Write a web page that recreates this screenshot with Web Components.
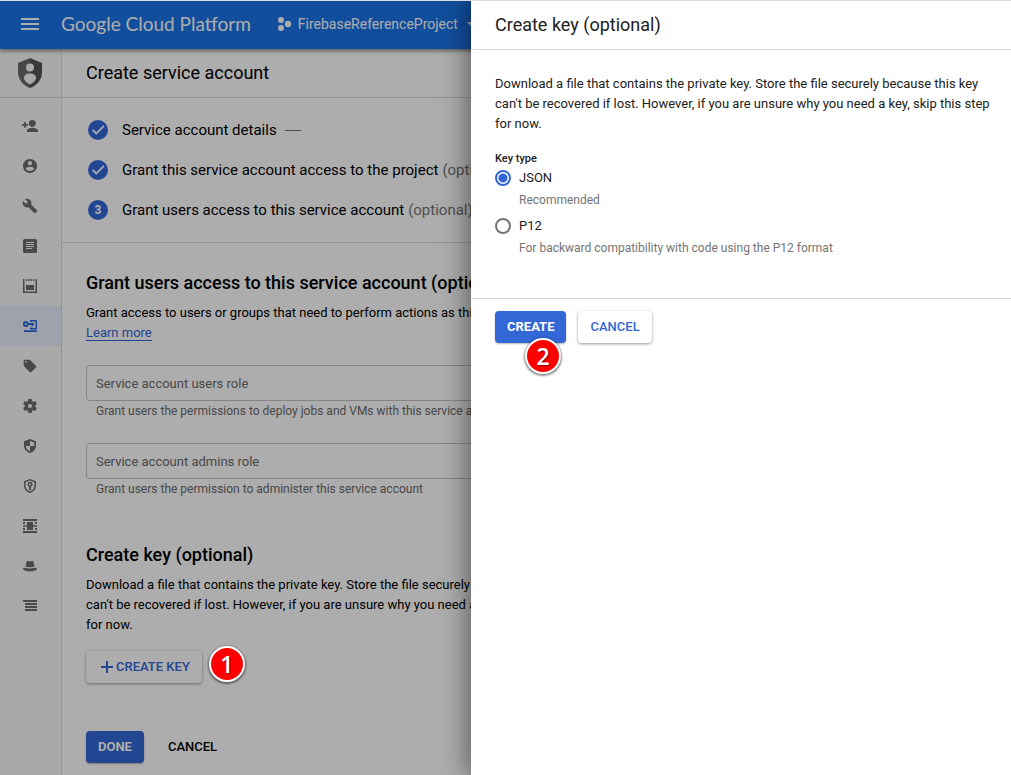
<!DOCTYPE html>
<html lang="en">
<head>
<meta charset="utf-8">
<title>Create service account</title>
<style>
  html, body { margin: 0; min-height: 100vh; }
  body { font: 13px/20px Roboto, sans-serif; color: #000; background: #fff; }
</style>
</head>
<body>
<gcp-app></gcp-app>

<script>
const define = (name, html, setup) => {
  const template = document.createElement('template');
  template.innerHTML = html;
  customElements.define(name, class extends HTMLElement {
    connectedCallback() {
      if (this.shadowRoot) return;
      this.attachShadow({ mode: 'open' }).append(template.content.cloneNode(true));
      if (setup) setup(this, this.shadowRoot);
    }
  });
};

/* Icons share an 18 unit grid. */
const ICONS = {
  'person-add': '<circle cx="11.3" cy="6.3" r="3.400"/><path d="M6 15v-1.200c0-1.900 3-3 5.400-3s5.600 1.100 5.600 3V15zM3.200 5h1.700v2H7v1.700H4.900v2H3.200v-2H1V7h2.200z"/>',
  'account': '<path transform="translate(.6 .6) scale(.7)" d="M12 2C6.480 2 2 6.480 2 12s4.480 10 10 10 10-4.480 10-10S17.520 2 12 2zm0 3c1.660 0 3 1.340 3 3s-1.340 3-3 3-3-1.340-3-3 1.340-3 3-3zm0 14.200c-2.500 0-4.710-1.280-6-3.220.030-1.990 4-3.080 6-3.080 1.990 0 5.970 1.090 6 3.080-1.290 1.940-3.500 3.220-6 3.220z"/>',
  'wrench': '<path transform="translate(1.200 1.200) scale(.65)" stroke="currentColor" stroke-width=".6" d="M22.7 19l-9.1-9.1c.9-2.3.4-5-1.5-6.900-2-2-5-2.400-7.400-1.300L9 6 6 9 1.600 4.700C.4 7.100.9 10.100 2.900 12.100c1.900 1.900 4.600 2.400 6.900 1.500l9.100 9.100c.4.4 1 .4 1.400 0l2.300-2.300c.5-.4.5-1.100.1-1.400z"/>',
  'article': '<path fill-rule="evenodd" d="M3.500 2h11A1.500 1.500 0 0 1 16 3.500v11a1.500 1.500 0 0 1-1.500 1.500h-11A1.500 1.500 0 0 1 2 14.500v-11A1.500 1.500 0 0 1 3.500 2zM5 5v1h8V5zm0 2v1h8V7zm0 2v1h8V9zm0 2v1h6v-1z"/>',
  'notepad': '<path d="M2 2h1.500v12.500h11V2H16v14H2zM5 8h8v5H5zM5 2h1.300v2H5zm2.300 0h1.300v2H7.300zm2.300 0h1.300v2H9.600zm2.300 0h1.300v2h-1.300z"/>',
  'key-account': '<path fill-rule="evenodd" d="M5 4a3 3 0 0 1 2.800 2H13v2h-1v1.500h-1.500V8H7.800A3 3 0 1 1 5 4zm0 2a1 1 0 1 0 0 2 1 1 0 0 0 0-2z"/><path d="M9 3h7v9.500H9v-2h1.500v.5h4V4.500h-4V5H9zM3 13.200h13V15H3z"/>',
  'tag': '<path transform="translate(1.400 1.400) scale(.63)" d="M21.410 11.580l-9-9C12.050 2.220 11.550 2 11 2H4c-1.100 0-2 .9-2 2v7c0 .55.22 1.050.59 1.420l9 9c.36.36.86.58 1.410.58.55 0 1.050-.22 1.410-.59l7-7c.37-.36.59-.86.59-1.410 0-.55-.23-1.060-.59-1.420zM5.500 7C4.670 7 4 6.330 4 5.500S4.670 4 5.500 4 7 4.670 7 5.500 6.330 7 5.500 7z"/>',
  'gear': '<path transform="translate(.6 .6) scale(.7)" d="M19.430 12.980c.04-.32.07-.64.07-.98s-.03-.66-.07-.98l2.110-1.650c.19-.15.24-.42.12-.64l-2-3.460c-.12-.22-.39-.3-.61-.22l-2.490 1c-.52-.4-1.080-.73-1.690-.98l-.38-2.650C14.460 2.180 14.250 2 14 2h-4c-.25 0-.46.18-.49.42l-.38 2.650c-.61.25-1.170.59-1.690.98l-2.490-1c-.23-.09-.49 0-.61.22l-2 3.460c-.13.22-.07.49.12.64l2.110 1.650c-.04.32-.07.65-.07.98s.03.66.07.98l-2.110 1.650c-.19.15-.24.42-.12.64l2 3.460c.12.22.39.3.61.22l2.490-1c.52.4 1.080.73 1.690.98l.38 2.650c.03.24.24.42.49.42h4c.25 0 .46-.18.49-.42l.38-2.650c.61-.25 1.170-.59 1.690-.98l2.490 1c.23.09.49 0 .61-.22l2-3.460c.12-.22.07-.49-.12-.64zM12 15a3 3 0 1 1 0-6 3 3 0 0 1 0 6z"/>',
  'shield': '<path fill-rule="evenodd" d="M9 2l6 2.300v4.200c0 3.500-2.500 6.500-6 7.500-3.500-1-6-4-6-7.500V4.300zM9 4v5H4.800c.3 2.500 1.900 4.400 4.200 5.200V9h4.200V5.500z"/>',
  'shield-key': '<path fill-rule="evenodd" d="M9 2l6 2.300v4.200c0 3.500-2.500 6.500-6 7.500-3.500-1-6-4-6-7.500V4.300zM9 3.600L4.500 5.300v3.200c0 2.700 1.800 5.100 4.500 5.900 2.700-.8 4.500-3.200 4.500-5.900V5.300z"/><path fill-rule="evenodd" d="M9 4.800a2.600 2.600 0 0 1 1 5v3.400H8.100V9.800a2.600 2.600 0 0 1 .9-5zm0 1.600a1 1 0 1 0 0 2 1 1 0 0 0 0-2z"/>',
  'queue': '<path d="M2 2h14v2H2zm0 12h14v2H2zM6 5h6v8H6zM2 5h2v2H2zm12 0h2v2h-2zM2 8.300h14v1.500H2zM2 11h2v2H2zm12 0h2v2h-2z"/>',
  'hat': '<path d="M4.500 9.500l.8-4C5.600 4 6.700 3.700 7.700 4.200c.9.4 1.700.4 2.600 0 1-.5 2.100-.2 2.400 1.300l.8 4c-2.500 1-6.500 1-9 0zM2 11.500c0-.7.7-1 1.700-.8 3.500.9 7.100.9 10.600 0 1-.2 1.700.1 1.700.8 0 1.700-3.400 2.900-7 2.900s-7-1.200-7-2.900z"/>',
  'lines': '<path d="M2 3h14v2H2zm2 3h12v2H4zm0 3h12v2H4zm0 3h12v2H4z"/>',
  'menu': '<path d="M0 3h18v2H0zm0 5h18v2H0zm0 5h18v2H0z"/>',
  'project': '<circle cx="5" cy="5" r="3"/><circle cx="5" cy="13" r="3"/><circle cx="12" cy="9" r="3.200"/>',
  'arrow': '<path d="M4 7h10l-5 5z"/>',
  'plus': '<path d="M8 3h2v5h5v2h-5v5H8v-5H3V8h5z"/>',
  'check': '<path d="M3 9.400l1.200-1.200 3.100 3.100 7-7 1.200 1.200-8.200 8.200z"/>'
};

define('gcp-icon', `
  <style>
    :host { display: block; width: 18px; height: 18px; flex: none; }
    svg { display: block; width: 100%; height: 100%; fill: currentColor; }
  </style>
  <svg viewBox="0 0 18 18" aria-hidden="true"></svg>`,
  (el, root) => { root.querySelector('svg').innerHTML = ICONS[el.getAttribute('name')] || ''; });

define('gcp-topbar', `
  <style>
    :host { display: block; position: relative; }
    header { display: flex; align-items: center; box-sizing: border-box; height: 48px; padding: 0 0 2px 21px; background: #1a73e8; color: #fff; box-shadow: 0 2px 4px rgba(0,0,0,.45); }
    button { display: flex; align-items: center; border: 0; padding: 0; background: none; color: inherit; font: inherit; }
    .logo { margin: 0 25px 0 22px; color: inherit; text-decoration: none; font: 19px/28px Lato, sans-serif; white-space: nowrap; }
    .project { gap: 4px; font-size: 14px; line-height: 20px; }
    .project gcp-icon:last-child { margin-left: 1px; }
  </style>
  <header>
    <button aria-label="Main menu"><gcp-icon name="menu"></gcp-icon></button>
    <a class="logo" href="#">Google Cloud Platform</a>
    <button class="project"><gcp-icon name="project"></gcp-icon>FirebaseReferenceProject<gcp-icon name="arrow"></gcp-icon></button>
  </header>`);

define('gcp-rail', `
  <style>
    :host { display: block; width: 61px; flex: none; background: #fafafa; border-right: 1px solid #dadada; color: #6c6c6c; }
    .product { display: flex; align-items: center; justify-content: center; height: 48px; border-bottom: 1px solid #dadada; margin-right: -1px; padding-right: 2px; }
    .product svg { width: 24px; height: 30px; }
    ul { list-style: none; margin: 0; padding: 8px 0; }
    a { display: flex; align-items: center; justify-content: center; height: 40px; padding-right: 1px; color: inherit; }
    a[aria-current] { background: #e8effc; color: #2f66dc; }
  </style>
  <div class="product">
    <svg viewBox="0 0 24 30" aria-hidden="true">
      <path fill="#6b6b6b" d="M12 0L0 5v9.500C0 21.500 5 27.500 12 30z"/>
      <path fill="#555" d="M12 0l12 5v9.500C24 21.500 19 27.500 12 30z"/>
      <circle cx="12" cy="9.500" r="4" fill="#fafafa"/>
      <path fill="#fafafa" d="M12 15.500c3.600 0 6 1.700 6 4.300 0 2.800-3.200 5.800-6 6.500-2.800-.7-6-3.700-6-6.500 0-2.600 2.400-4.300 6-4.300z"/>
    </svg>
  </div>
  <nav aria-label="IAM and admin"><ul></ul></nav>`,
  (el, root) => {
    const items = [['person-add', 'IAM'], ['account', 'Identity'], ['wrench', 'Troubleshooter'], ['article', 'Policies'],
      ['notepad', 'Quotas'], ['key-account', 'Service accounts'], ['tag', 'Labels'], ['gear', 'Settings'], ['shield', 'Privacy'],
      ['shield-key', 'Keys'], ['queue', 'Proxy'], ['hat', 'Roles'], ['lines', 'Audit logs']];
    root.querySelector('ul').innerHTML = items.map(([icon, label]) =>
      `<li><a href="#" aria-label="${label}"${icon === 'key-account' ? ' aria-current="page"' : ''}><gcp-icon name="${icon}"></gcp-icon></a></li>`).join('');
  });

define('gcp-step', `
  <style>
    :host { display: flex; align-items: center; height: 40px; padding-left: 2px; font-size: 15px; white-space: nowrap; }
    .mark { display: flex; align-items: center; justify-content: center; width: 20px; height: 20px; margin-right: 14px; border-radius: 50%; background: #3367d6; color: #fff; font-size: 12px; font-weight: 700; }
    .optional { color: #757575; margin-left: 4px; }
    .dash { width: 16px; height: 1px; margin-left: 8px; background: #757575; }
  </style>
  <span class="mark"></span><span><slot></slot></span>`,
  (el, root) => {
    const number = el.getAttribute('number');
    root.querySelector('.mark').innerHTML = number || '<gcp-icon name="check"></gcp-icon>';
    if (el.hasAttribute('optional')) root.append(Object.assign(document.createElement('span'), { className: 'optional', textContent: '(optional)' }));
    if (el.hasAttribute('dash')) root.append(Object.assign(document.createElement('span'), { className: 'dash' }));
  });

define('gcp-section', `
  <style>
    :host { display: block; }
    h2 { margin: 0 0 8px; font-size: 18px; font-weight: 500; line-height: 24px; white-space: nowrap; }
    p { display: flow-root; margin: 0; max-width: 508px; }
    ::slotted(a) { display: table; line-height: 14px; margin: 3px 0 2px; color: #3367d6; text-decoration: none; border-bottom: 1px solid #3367d6; }
  </style>
  <h2><slot name="title"></slot></h2>
  <p><slot></slot></p>
  <slot name="body"></slot>`);

define('gcp-field', `
  <style>
    :host { display: block; margin-top: 22px; max-width: 508px; }
    input { display: block; box-sizing: border-box; width: 100%; height: 36px; padding: 0 9px; border: 1px solid #c4c4c4; border-radius: 4px; background: none; font: inherit; }
    input::placeholder { color: #6b6b6b; opacity: 1; }
    .hint { padding-left: 10px; font-size: 12px; color: #6b6b6b; white-space: nowrap; }
  </style>
  <input id="field" aria-describedby="hint">
  <div class="hint" id="hint"><slot></slot></div>`,
  (el, root) => {
    const input = root.querySelector('input');
    input.placeholder = el.getAttribute('label');
    input.setAttribute('aria-label', el.getAttribute('label'));
  });

define('gcp-button', `
  <style>
    :host { display: block; }
    button { display: flex; align-items: center; height: 32px; padding: 0 12px; border: 0; border-radius: 4px; background: none; color: #000; font: 500 13px/20px Roboto, sans-serif; white-space: nowrap; }
    :host([kind]) button { color: #3367d6; box-shadow: 0 1px 3px rgba(0,0,0,.4); }
    :host([kind="filled"]) button { background: #3367d6; color: #fff; font-weight: 700; box-shadow: 0 1px 2px rgba(0,0,0,.3); }
  </style>
  <button><slot></slot></button>`,
  (el, root) => {
    if (!el.hasAttribute('icon')) return;
    const icon = document.createElement('gcp-icon');
    icon.setAttribute('name', el.getAttribute('icon'));
    root.querySelector('button').prepend(icon);
  });

define('gcp-badge', `
  <style>
    :host { display: flex; align-items: center; justify-content: center; box-sizing: border-box; width: 36px; height: 36px; border: 2px solid #fff; border-radius: 50%; background: #f00; color: #fff; font: 600 23px/32px "Open Sans", sans-serif; box-shadow: 0 1px 2px 1px rgba(0,0,0,.45); text-shadow: 1px 1px 1px rgba(0,0,0,.5); }
  </style>
  <slot></slot>`);

define('gcp-account-page', `
  <style>
    :host { display: block; flex: 1; min-width: 0; }
    h1 { display: flex; align-items: center; height: 48px; margin: 0; padding-left: 24px; border-bottom: 1px solid #dadada; font-size: 18px; font-weight: 400; }
    .steps { padding: 12px 24px; border-bottom: 1px solid #dadada; }
    .content { padding: 28px 24px 12px; }
    .key { margin-top: 44px; }
    .create { position: relative; width: max-content; margin-top: 16px; }
    .create gcp-badge { position: absolute; left: 100%; top: -5px; margin-left: 7px; z-index: 3; }
    .actions { display: flex; gap: 12px; margin-top: 48px; }
  </style>
  <h1>Create service account</h1>
  <div class="steps">
    <gcp-step dash>Service account details</gcp-step>
    <gcp-step optional>Grant this service account access to the project</gcp-step>
    <gcp-step number="3" optional>Grant users access to this service account</gcp-step>
  </div>
  <div class="content">
    <gcp-section>
      <span slot="title">Grant users access to this service account (optional)</span>
      Grant access to users or groups that need to perform actions as this service account.
      <a href="#">Learn more</a>
    </gcp-section>
    <gcp-field label="Service account users role">Grant users the permissions to deploy jobs and VMs with this service account</gcp-field>
    <gcp-field label="Service account admins role">Grant users the permission to administer this service account</gcp-field>
    <gcp-section class="key">
      <span slot="title">Create key (optional)</span>
      Download a file that contains the private key. Store the file securely because this key can't be recovered if lost. However, if you are unsure why you need a key, skip this step for now.
      <div class="create" slot="body">
        <gcp-button kind="raised" icon="plus">CREATE KEY</gcp-button>
        <gcp-badge>1</gcp-badge>
      </div>
    </gcp-section>
    <div class="actions">
      <gcp-button kind="filled">DONE</gcp-button>
      <gcp-button>CANCEL</gcp-button>
    </div>
  </div>`);

define('gcp-key-type', `
  <style>
    :host { display: block; }
    fieldset { margin: 0; padding: 0; border: 0; }
    legend { padding: 0; font-size: 11px; font-weight: 500; line-height: 18px; }
    .option { display: grid; grid-template-columns: 16px 1fr; column-gap: 8px; row-gap: 2px; align-items: center; margin-bottom: 6px; }
    .option:last-child { margin-bottom: 0; }
    input { appearance: none; box-sizing: border-box; width: 16px; height: 16px; margin: 0; border: 2px solid #757575; border-radius: 50%; }
    input:checked { border-color: #3367d6; background: radial-gradient(circle, #3367d6 4px, transparent 5px); }
    .hint { grid-column: 2; font-size: 12px; color: #757575; }
  </style>
  <fieldset>
    <legend>Key type</legend>
    <div class="option">
      <input type="radio" name="key-type" id="json" checked aria-describedby="json-hint">
      <label for="json">JSON</label>
      <span class="hint" id="json-hint">Recommended</span>
    </div>
    <div class="option">
      <input type="radio" name="key-type" id="p12" aria-describedby="p12-hint">
      <label for="p12">P12</label>
      <span class="hint" id="p12-hint">For backward compatibility with code using the P12 format</span>
    </div>
  </fieldset>`);

define('gcp-drawer', `
  <style>
    :host { display: block; box-sizing: border-box; background: #fff; color: #212121; box-shadow: 0 0 26px 2px rgba(0,0,0,.5); }
    h2 { display: flex; align-items: center; height: 48px; margin: 0; padding-left: 24px; border-bottom: 1px solid #dadce0; font-size: 18px; font-weight: 400; }
    .body { padding: 24px 16px 40px 24px; border-bottom: 1px solid #dadce0; }
    p { margin: 0 0 16px; }
    .actions { display: flex; gap: 12px; padding: 12px 24px; }
    .create { position: relative; }
    .create gcp-badge { position: absolute; left: 30px; top: 27px; }
  </style>
  <h2>Create key (optional)</h2>
  <div class="body">
    <p>Download a file that contains the private key. Store the file securely because this key can't be recovered if lost. However, if you are unsure why you need a key, skip this step for now.</p>
    <gcp-key-type></gcp-key-type>
  </div>
  <div class="actions">
    <div class="create"><gcp-button kind="filled">CREATE</gcp-button><gcp-badge>2</gcp-badge></div>
    <gcp-button kind="raised">CANCEL</gcp-button>
  </div>`);

define('gcp-app', `
  <style>
    :host { display: flex; flex-direction: column; position: relative; box-sizing: border-box; min-height: 100vh; border-top: 1px solid #dadce0; overflow: hidden; }
    .row { display: flex; flex: 1; }
    .scrim { position: absolute; inset: 0; z-index: 2; background: rgba(0,0,0,.32); }
    gcp-topbar { z-index: 1; }
    gcp-drawer { position: absolute; top: 0; right: 0; bottom: 0; width: 540px; max-width: 100%; z-index: 4; }
  </style>
  <gcp-topbar></gcp-topbar>
  <div class="row">
    <gcp-rail></gcp-rail>
    <gcp-account-page></gcp-account-page>
  </div>
  <div class="scrim"></div>
  <gcp-drawer role="dialog" aria-label="Create key"></gcp-drawer>`);
</script>
</body>
</html>
